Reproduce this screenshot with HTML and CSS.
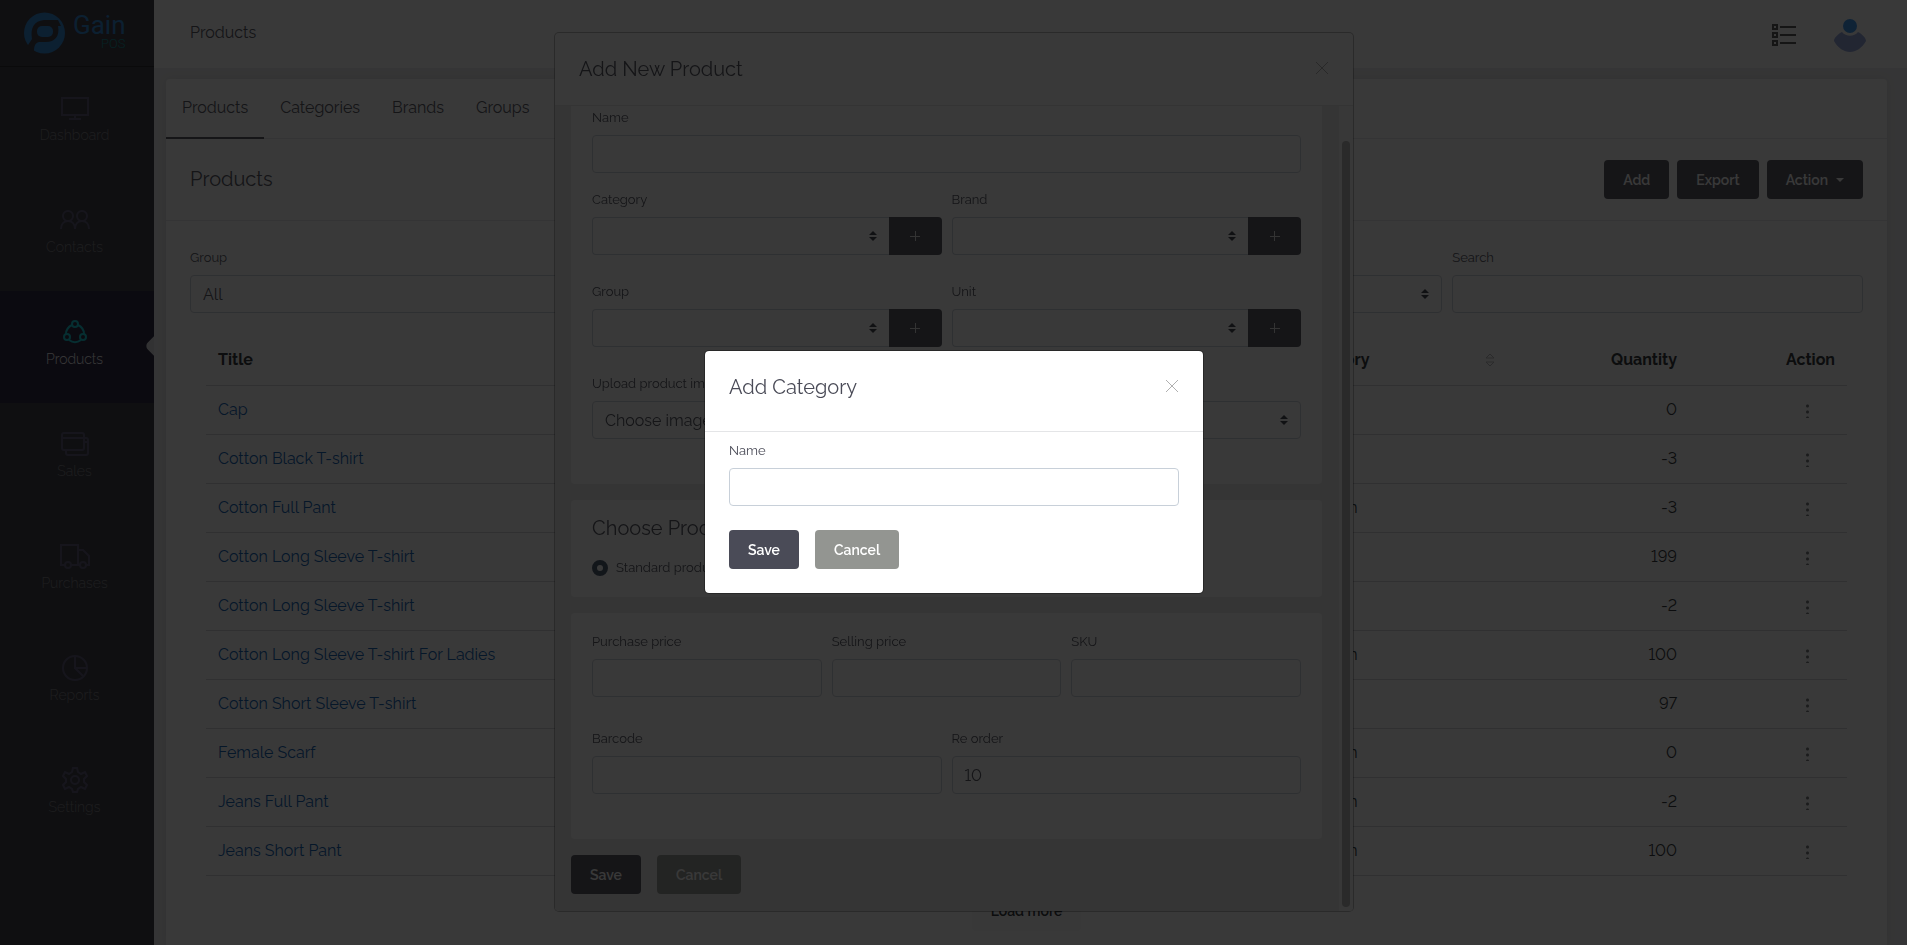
FILE: index.html
```html
<!DOCTYPE html>
<html lang="en">
<head>
    <meta charset="UTF-8">
    <meta name="viewport" content="width=device-width, initial-scale=1">
    <title>Products - Gain POS</title>
    <link rel="stylesheet" href="styles.css">
</head>
<body>
    <div class="app">
        <nav class="sidebar">
            <a class="logo" href="#">
                <svg width="41" height="42" viewBox="0 0 41 42">
                    <circle cx="20.500" cy="21" r="20.500"/>
                    <path class="logo-cut" d="M2 36 L8 27 C6 16 10 9 20 8 L34 8 L37 14 L34 14 C36 24 31 30 22 30 L15 30 C11 31 10 34 10 40 L2 42 Z"/>
                    <rect x="13" y="14" width="16" height="11" rx="5"/>
                </svg>
                <span class="logo-text">Gain<small>POS</small></span>
            </a>
            <a class="nav-item" href="#">
                <svg width="28" height="28" viewBox="0 0 28 28"><path d="M1 4h26v17H1zM14 21v4M8 25h12"/></svg>
                <span>Dashboard</span>
            </a>
            <a class="nav-item" href="#">
                <svg width="30" height="28" viewBox="0 0 30 28"><circle cx="8" cy="10" r="5"/><circle cx="22" cy="10" r="5"/><path d="M1 23c0-5 3-8 7-8s7 3 7 8c0-5 3-8 7-8s7 3 7 8"/></svg>
                <span>Contacts</span>
            </a>
            <a class="nav-item active" href="#">
                <svg width="28" height="28" viewBox="0 0 28 28"><circle cx="14" cy="6" r="3"/><circle cx="6" cy="19" r="3"/><circle cx="22" cy="19" r="3"/><path d="M11 7C7 9 5 12 5 16M17 7c4 2 6 5 6 9M8 22c4 3 8 3 12 0"/></svg>
                <span>Products</span>
            </a>
            <a class="nav-item" href="#">
                <svg width="28" height="28" viewBox="0 0 28 28"><rect x="1" y="3" width="22" height="17" rx="2"/><path d="M1 8h22M23 8h2c1 0 2 1 2 2v13c0 1-1 2-2 2H7c-1 0-2-1-2-2v-3M23 12h4"/></svg>
                <span>Sales</span>
            </a>
            <a class="nav-item" href="#">
                <svg width="30" height="28" viewBox="0 0 30 28"><path d="M5 23H1V3h17v20H11M18 8h5l6 6v9h-3M20 23h-2"/><circle cx="8" cy="23" r="3"/><circle cx="23" cy="23" r="3"/></svg>
                <span>Purchases</span>
            </a>
            <a class="nav-item" href="#">
                <svg width="28" height="28" viewBox="0 0 28 28"><circle cx="14" cy="14" r="12"/><path d="M14 2v12h12M14 14l8 8"/></svg>
                <span>Reports</span>
            </a>
            <a class="nav-item" href="#">
                <svg width="28" height="28" viewBox="0 0 28 28"><circle cx="14" cy="14" r="4"/><path d="M12 2h4l1 4 3 2 4-2 2 4-3 3v3l3 3-2 4-4-2-3 2-1 3h-4l-1-3-3-2-4 2-2-4 3-3v-3l-3-3 2-4 4 2 3-2z"/></svg>
                <span>Settings</span>
            </a>
        </nav>

        <div class="main">
            <header class="topbar">
                <span class="page-name">Products</span>
                <div class="topbar-icons">
                    <svg class="list-icon" width="24" height="22" viewBox="0 0 24 22"><path d="M1 1h4v4H1zM1 9h4v4H1zM1 17h4v4H1zM8 3h16M8 11h16M8 19h16"/></svg>
                    <svg width="32" height="34" viewBox="0 0 32 34"><circle cx="16" cy="8" r="7" fill="#2f8fee"/><path d="M8 14c4 5 12 5 16 0 4 2 8 6 8 9-4 7-10 11-16 11S4 30 0 23c0-3 4-7 8-9z" fill="#8b9fdc"/></svg>
                </div>
            </header>

            <section class="panel">
                <div class="tabs">
                    <a class="tab active" href="#">Products</a>
                    <a class="tab" href="#">Categories</a>
                    <a class="tab" href="#">Brands</a>
                    <a class="tab" href="#">Groups</a>
                </div>
                <div class="panel-header">
                    <h1>Products</h1>
                    <div class="actions">
                        <button class="btn" type="button">Add</button>
                        <button class="btn" type="button">Export</button>
                        <button class="btn dropdown" type="button">Action</button>
                    </div>
                </div>
                <div class="filters">
                    <div class="field">
                        <label for="filter-group">Group</label>
                        <select id="filter-group"><option>All</option></select>
                    </div>
                    <div class="field">
                        <label for="filter-brand">Brand</label>
                        <select id="filter-brand"><option>All</option></select>
                    </div>
                    <div class="field">
                        <label for="filter-category">Category</label>
                        <select id="filter-category"><option>All</option></select>
                    </div>
                    <div class="field">
                        <label for="search">Search</label>
                        <input id="search" type="text">
                    </div>
                </div>
                <table class="products">
                    <thead>
                        <tr>
                            <th>Title</th>
                            <th class="category"><div class="sortable">Category <svg width="10" height="14" viewBox="0 0 10 14"><path d="M1 5l4-4 4 4zM1 9l4 4 4-4z"/></svg></div></th>
                            <th class="quantity">Quantity</th>
                            <th class="action">Action</th>
                        </tr>
                    </thead>
                    <tbody>
                        <tr><td><a href="#">Cap</a></td><td>Men</td><td class="quantity">0</td><td class="action"><button class="dots" type="button" aria-label="Row menu"></button></td></tr>
                        <tr><td><a href="#">Cotton Black T-shirt</a></td><td>Men</td><td class="quantity">-3</td><td class="action"><button class="dots" type="button" aria-label="Row menu"></button></td></tr>
                        <tr><td><a href="#">Cotton Full Pant</a></td><td>Women</td><td class="quantity">-3</td><td class="action"><button class="dots" type="button" aria-label="Row menu"></button></td></tr>
                        <tr><td><a href="#">Cotton Long Sleeve T-shirt</a></td><td>Men</td><td class="quantity">199</td><td class="action"><button class="dots" type="button" aria-label="Row menu"></button></td></tr>
                        <tr><td><a href="#">Cotton Long Sleeve T-shirt</a></td><td>Men</td><td class="quantity">-2</td><td class="action"><button class="dots" type="button" aria-label="Row menu"></button></td></tr>
                        <tr><td><a href="#">Cotton Long Sleeve T-shirt For Ladies</a></td><td>Women</td><td class="quantity">100</td><td class="action"><button class="dots" type="button" aria-label="Row menu"></button></td></tr>
                        <tr><td><a href="#">Cotton Short Sleeve T-shirt</a></td><td>Men</td><td class="quantity">97</td><td class="action"><button class="dots" type="button" aria-label="Row menu"></button></td></tr>
                        <tr><td><a href="#">Female Scarf</a></td><td>Women</td><td class="quantity">0</td><td class="action"><button class="dots" type="button" aria-label="Row menu"></button></td></tr>
                        <tr><td><a href="#">Jeans Full Pant</a></td><td>Women</td><td class="quantity">-2</td><td class="action"><button class="dots" type="button" aria-label="Row menu"></button></td></tr>
                        <tr><td><a href="#">Jeans Short Pant</a></td><td>Women</td><td class="quantity">100</td><td class="action"><button class="dots" type="button" aria-label="Row menu"></button></td></tr>
                    </tbody>
                </table>
                <div class="load-more">
                    <button class="btn light" type="button">Load more</button>
                </div>
            </section>
        </div>
    </div>

    <!-- Add product -->
    <div class="modal-wrap">
        <div class="modal modal-lg" role="dialog" aria-labelledby="product-title">
            <div class="modal-header">
                <h2 id="product-title">Add New Product</h2>
                <button class="close" type="button" aria-label="Close"><svg width="14" height="14" viewBox="0 0 14 14"><path d="M1 1l12 12M13 1L1 13"/></svg></button>
            </div>
            <div class="modal-scroll">
                <form class="product-form">
                    <div class="card card-first">
                        <div class="field">
                            <label for="p-name">Name</label>
                            <input id="p-name" type="text">
                        </div>
                        <div class="row">
                            <div class="field">
                                <label for="p-category">Category</label>
                                <div class="input-group"><select id="p-category"></select><button class="plus" type="button" aria-label="Add category"></button></div>
                            </div>
                            <div class="field">
                                <label for="p-brand">Brand</label>
                                <div class="input-group"><select id="p-brand"></select><button class="plus" type="button" aria-label="Add brand"></button></div>
                            </div>
                            <div class="field">
                                <label for="p-group">Group</label>
                                <div class="input-group"><select id="p-group"></select><button class="plus" type="button" aria-label="Add group"></button></div>
                            </div>
                            <div class="field">
                                <label for="p-unit">Unit</label>
                                <div class="input-group"><select id="p-unit"></select><button class="plus" type="button" aria-label="Add unit"></button></div>
                            </div>
                        </div>
                        <div class="field">
                            <label for="p-image">Upload product image</label>
                            <select id="p-image"><option>Choose image</option></select>
                        </div>
                    </div>
                    <div class="card card-type">
                        <h2>Choose Product Type</h2>
                        <label class="radio"><input type="radio" name="type" checked> Standard product</label>
                    </div>
                    <div class="card card-price">
                        <div class="row three">
                            <div class="field"><label for="p-purchase">Purchase price</label><input id="p-purchase" type="text"></div>
                            <div class="field"><label for="p-selling">Selling price</label><input id="p-selling" type="text"></div>
                            <div class="field"><label for="p-sku">SKU</label><input id="p-sku" type="text"></div>
                        </div>
                        <div class="row">
                            <div class="field"><label for="p-barcode">Barcode</label><input id="p-barcode" type="text"></div>
                            <div class="field"><label for="p-reorder">Re order</label><input id="p-reorder" type="text" value="10"></div>
                        </div>
                    </div>
                    <div class="buttons">
                        <button class="btn" type="button">Save</button>
                        <button class="btn grey" type="button">Cancel</button>
                    </div>
                </form>
                <div class="scrollbar"><div class="thumb"></div></div>
            </div>
        </div>
    </div>

    <!-- Add category -->
    <div class="modal-wrap backdrop">
        <div class="modal modal-sm" role="dialog" aria-modal="true" aria-labelledby="category-title">
            <div class="modal-header">
                <h2 id="category-title">Add Category</h2>
                <button class="close" type="button" aria-label="Close"><svg width="14" height="14" viewBox="0 0 14 14"><path d="M1 1l12 12M13 1L1 13"/></svg></button>
            </div>
            <form class="category-form">
                <div class="field">
                    <label for="c-name">Name</label>
                    <input id="c-name" type="text">
                </div>
                <div class="buttons">
                    <button class="btn" type="button">Save</button>
                    <button class="btn grey" type="button">Cancel</button>
                </div>
            </form>
        </div>
    </div>
</body>
</html>
```
FILE: styles.css
```css
* {
    box-sizing: border-box;
}
body {
    margin: 0;
    height: 100vh;
    overflow: hidden;
    font-family: Raleway, 'Open Sans', sans-serif;
    font-variant-numeric: lining-nums;
    font-size: 16px;
    line-height: 24px;
    color: #212529;
    background-color: #ebebed;
}
a {
    color: #0057b0;
    text-decoration: none;
}
h1, h2 {
    margin: 0;
    font-size: 20px;
    line-height: 24px;
    font-weight: 400;
    color: #4a4b57;
}
button, input, select {
    font-family: inherit;
    font-variant-numeric: inherit;
}
.app {
    display: flex;
    height: 100vh;
}

/* Sidebar */
.sidebar {
    width: 154px;
    flex-shrink: 0;
    background-color: #2f2f38;
    overflow: hidden;
}
.logo {
    display: flex;
    gap: 8px;
    height: 67px;
    padding: 12px 24px;
    border-bottom: 1px solid #17171c;
    color: #2080d8;
}
.logo svg {
    fill: #2080d8;
    flex-shrink: 0;
}
.logo .logo-cut {
    fill: #2f2f38;
}
.logo-text {
    font-family: Roboto, sans-serif;
    font-size: 26px;
    line-height: 26px;
    font-weight: 400;
}
.logo-text small {
    display: block;
    font-size: 13px;
    line-height: 12px;
    font-weight: 300;
    text-align: right;
    color: #008a94;
}
.nav-item {
    position: relative;
    display: flex;
    flex-direction: column;
    align-items: center;
    gap: 1px;
    height: 112px;
    padding: 27px 5px 0 0;
    font-size: 14px;
    font-weight: 300;
    color: #77777f;
}
.nav-item svg {
    fill: none;
    stroke: #504e70;
    stroke-width: 2;
}
.nav-item.active {
    background-color: #1b1634;
    color: #ffffff;
}
.nav-item.active svg {
    stroke: #00c8d4;
}
.nav-item.active::after {
    content: "";
    position: absolute;
    right: -12px;
    top: 46px;
    width: 18px;
    height: 18px;
    border-radius: 5px;
    background-color: #dcdce2;
    transform: rotate(45deg);
}

/* Main area */
.main {
    display: flex;
    flex-direction: column;
    flex: 1;
    min-width: 0;
}
.topbar {
    display: flex;
    justify-content: space-between;
    align-items: flex-start;
    flex-shrink: 0;
    height: 68px;
    padding: 18px 41px 0 36px;
    background-color: #ffffff;
}
.page-name {
    line-height: 30px;
    color: #4a4b57;
}
.topbar-icons {
    display: flex;
    align-items: center;
    gap: 38px;
}
.list-icon {
    fill: none;
    stroke: #4a4b4d;
    stroke-width: 2;
}
.panel {
    flex: 1;
    margin: 11px 20px 0 12px;
    background-color: #ffffff;
    border-radius: 4px 4px 0 0;
    box-shadow: 0 0 10px rgba(0, 0, 0, 0.08);
}
.tabs {
    display: flex;
    height: 60px;
    border-bottom: 1px solid #e4e4e8;
}
.tab {
    height: 60px;
    padding: 17px 16px 0;
    color: #4a4b57;
}
.tab.active {
    border-bottom: 2px solid #4a4b57;
}
.panel-header {
    display: flex;
    justify-content: space-between;
    align-items: center;
    height: 82px;
    padding: 0 24px;
    border-bottom: 1px solid #e4e4e8;
}
.panel-header h1 {
    margin-bottom: 2px;
}
.actions {
    display: flex;
    gap: 8px;
}
.filters {
    display: grid;
    grid-template-columns: repeat(4, 1fr);
    gap: 10px;
    padding: 26px 24px 0;
}

/* Buttons */
.btn {
    height: 39px;
    padding: 0 19px;
    border: none;
    border-radius: 4px;
    background-color: #4a4b57;
    color: #ffffff;
    font-size: 14px;
    font-weight: 600;
}
.btn.grey {
    background-color: #939591;
}
.btn.light {
    background-color: #f8f8fa;
    color: #212529;
}
.dropdown::after {
    content: "";
    display: inline-block;
    margin-left: 8px;
    vertical-align: 3px;
    border: 4px solid transparent;
    border-top-color: #ffffff;
    border-bottom: 0;
}

/* Form fields */
.field label {
    display: block;
    margin-bottom: 6px;
    font-size: 13px;
    line-height: 22px;
    color: #4a4b57;
}
.field input, .field select {
    display: block;
    width: 100%;
    height: 38px;
    padding: 0 12px;
    border: 1px solid #c8d0d9;
    border-radius: 4px;
    background-color: #ffffff;
    font-size: 16px;
    color: #4a4b57;
}
.field select {
    appearance: none;
    background-image: url("data:image/svg+xml,%3Csvg xmlns='http://www.w3.org/2000/svg' viewBox='0 0 8 10'%3E%3Cpath fill='%23343a40' d='M4 0L0 4h8zM4 10L0 6h8z'/%3E%3C/svg%3E");
    background-repeat: no-repeat;
    background-position: right 12px center;
    background-size: 8px 10px;
}
.input-group {
    display: flex;
}
.input-group select {
    flex: 1;
    min-width: 0;
    border-right: none;
    border-radius: 4px 0 0 4px;
}
.plus {
    width: 53px;
    border: none;
    border-radius: 0 4px 4px 0;
    background: linear-gradient(#e0e0e0, #e0e0e0) center / 10px 1px no-repeat, linear-gradient(#e0e0e0, #e0e0e0) center / 1px 10px no-repeat, #4a4b57;
}

/* Table */
.products {
    width: calc(100% - 80px);
    margin: 22px 40px 0;
    border-collapse: collapse;
    table-layout: fixed;
}
.products th, .products td {
    height: 49px;
    padding: 0 12px;
    border-bottom: 1px solid #d0d2d6;
    text-align: left;
    font-weight: 400;
}
.products th {
    height: 50px;
    padding-top: 1px;
    font-weight: 700;
}
.products th.category {
    width: 220px;
}
.products th.quantity {
    width: 182px;
}
.products th.action {
    width: 158px;
}
.products .quantity, .products .action {
    text-align: right;
}
.sortable {
    display: flex;
    justify-content: space-between;
    align-items: center;
}
.sortable svg {
    fill: none;
    stroke: #b4b6ba;
}
.dots {
    width: 3px;
    height: 15px;
    margin-right: 26px;
    padding: 0;
    border: none;
    vertical-align: middle;
    background: radial-gradient(circle, #6c6d70 1px, transparent 2px) 0 0 / 3px 6px;
}
.load-more {
    margin-top: 16px;
    text-align: center;
}

/* Modals */
.modal-wrap {
    position: fixed;
    inset: 0;
    display: flex;
    align-items: center;
    justify-content: center;
    padding: 0 0 1px 1px;
}
.backdrop {
    background-color: rgba(7, 7, 7, 0.8);
}
.modal {
    display: flex;
    flex-direction: column;
    background-color: #ffffff;
    border: 1px solid rgba(0, 0, 0, 0.3);
    background-clip: padding-box;
    border-radius: 5px;
    overflow: hidden;
}
.modal-lg {
    width: 800px;
    height: calc(100% - 64px);
}
.modal-sm {
    width: 500px;
}
.modal-header {
    display: flex;
    justify-content: space-between;
    align-items: flex-start;
    flex-shrink: 0;
    height: 73px;
    padding: 24px;
    border-bottom: 1px solid #e4e5e7;
}
.modal-sm .modal-header {
    height: 81px;
}
.close {
    height: 22px;
    padding: 0;
    border: none;
    background: none;
}
.close svg {
    display: block;
    fill: none;
    stroke: #b0b0b0;
    stroke-width: 1;
}
.modal-scroll {
    display: flex;
    flex: 1;
    min-height: 0;
    background-color: #ececec;
}
.product-form {
    flex: 1;
    padding: 0 17px 0 16px;
}
.card {
    margin-bottom: 16px;
    padding: 18px 21px 45px;
    border-radius: 4px;
    background-color: #ffffff;
}
.card-first {
    padding-top: 1px;
    border-radius: 0 0 4px 4px;
}
.card-type {
    padding: 16px 21px 18px;
}
.row {
    display: grid;
    grid-template-columns: repeat(2, 1fr);
    gap: 26px 10px;
    margin: 16px 0 26px;
}
.card-price .row {
    margin: 0;
}
.card-price .three {
    grid-template-columns: repeat(3, 1fr);
    margin-bottom: 31px;
}
.radio {
    display: flex;
    align-items: center;
    gap: 8px;
    margin-top: 17px;
    font-size: 13px;
    line-height: 22px;
    color: #4a4b57;
}
.radio input {
    appearance: none;
    width: 16px;
    height: 16px;
    margin: 0;
    border: 5px solid #3f4f66;
    border-radius: 50%;
    background-color: #ffffff;
}
.buttons {
    display: flex;
    gap: 16px;
}
.buttons .btn {
    min-width: 70px;
}
.scrollbar {
    width: 14px;
    padding: 35px 3px 4px;
    background-color: #f8f8f8;
}
.thumb {
    width: 8px;
    height: 100%;
    border-radius: 4px;
    background-color: #b2b2b2;
}
.category-form {
    padding: 8px 24px 24px;
}
.category-form .buttons {
    margin-top: 24px;
}
```
